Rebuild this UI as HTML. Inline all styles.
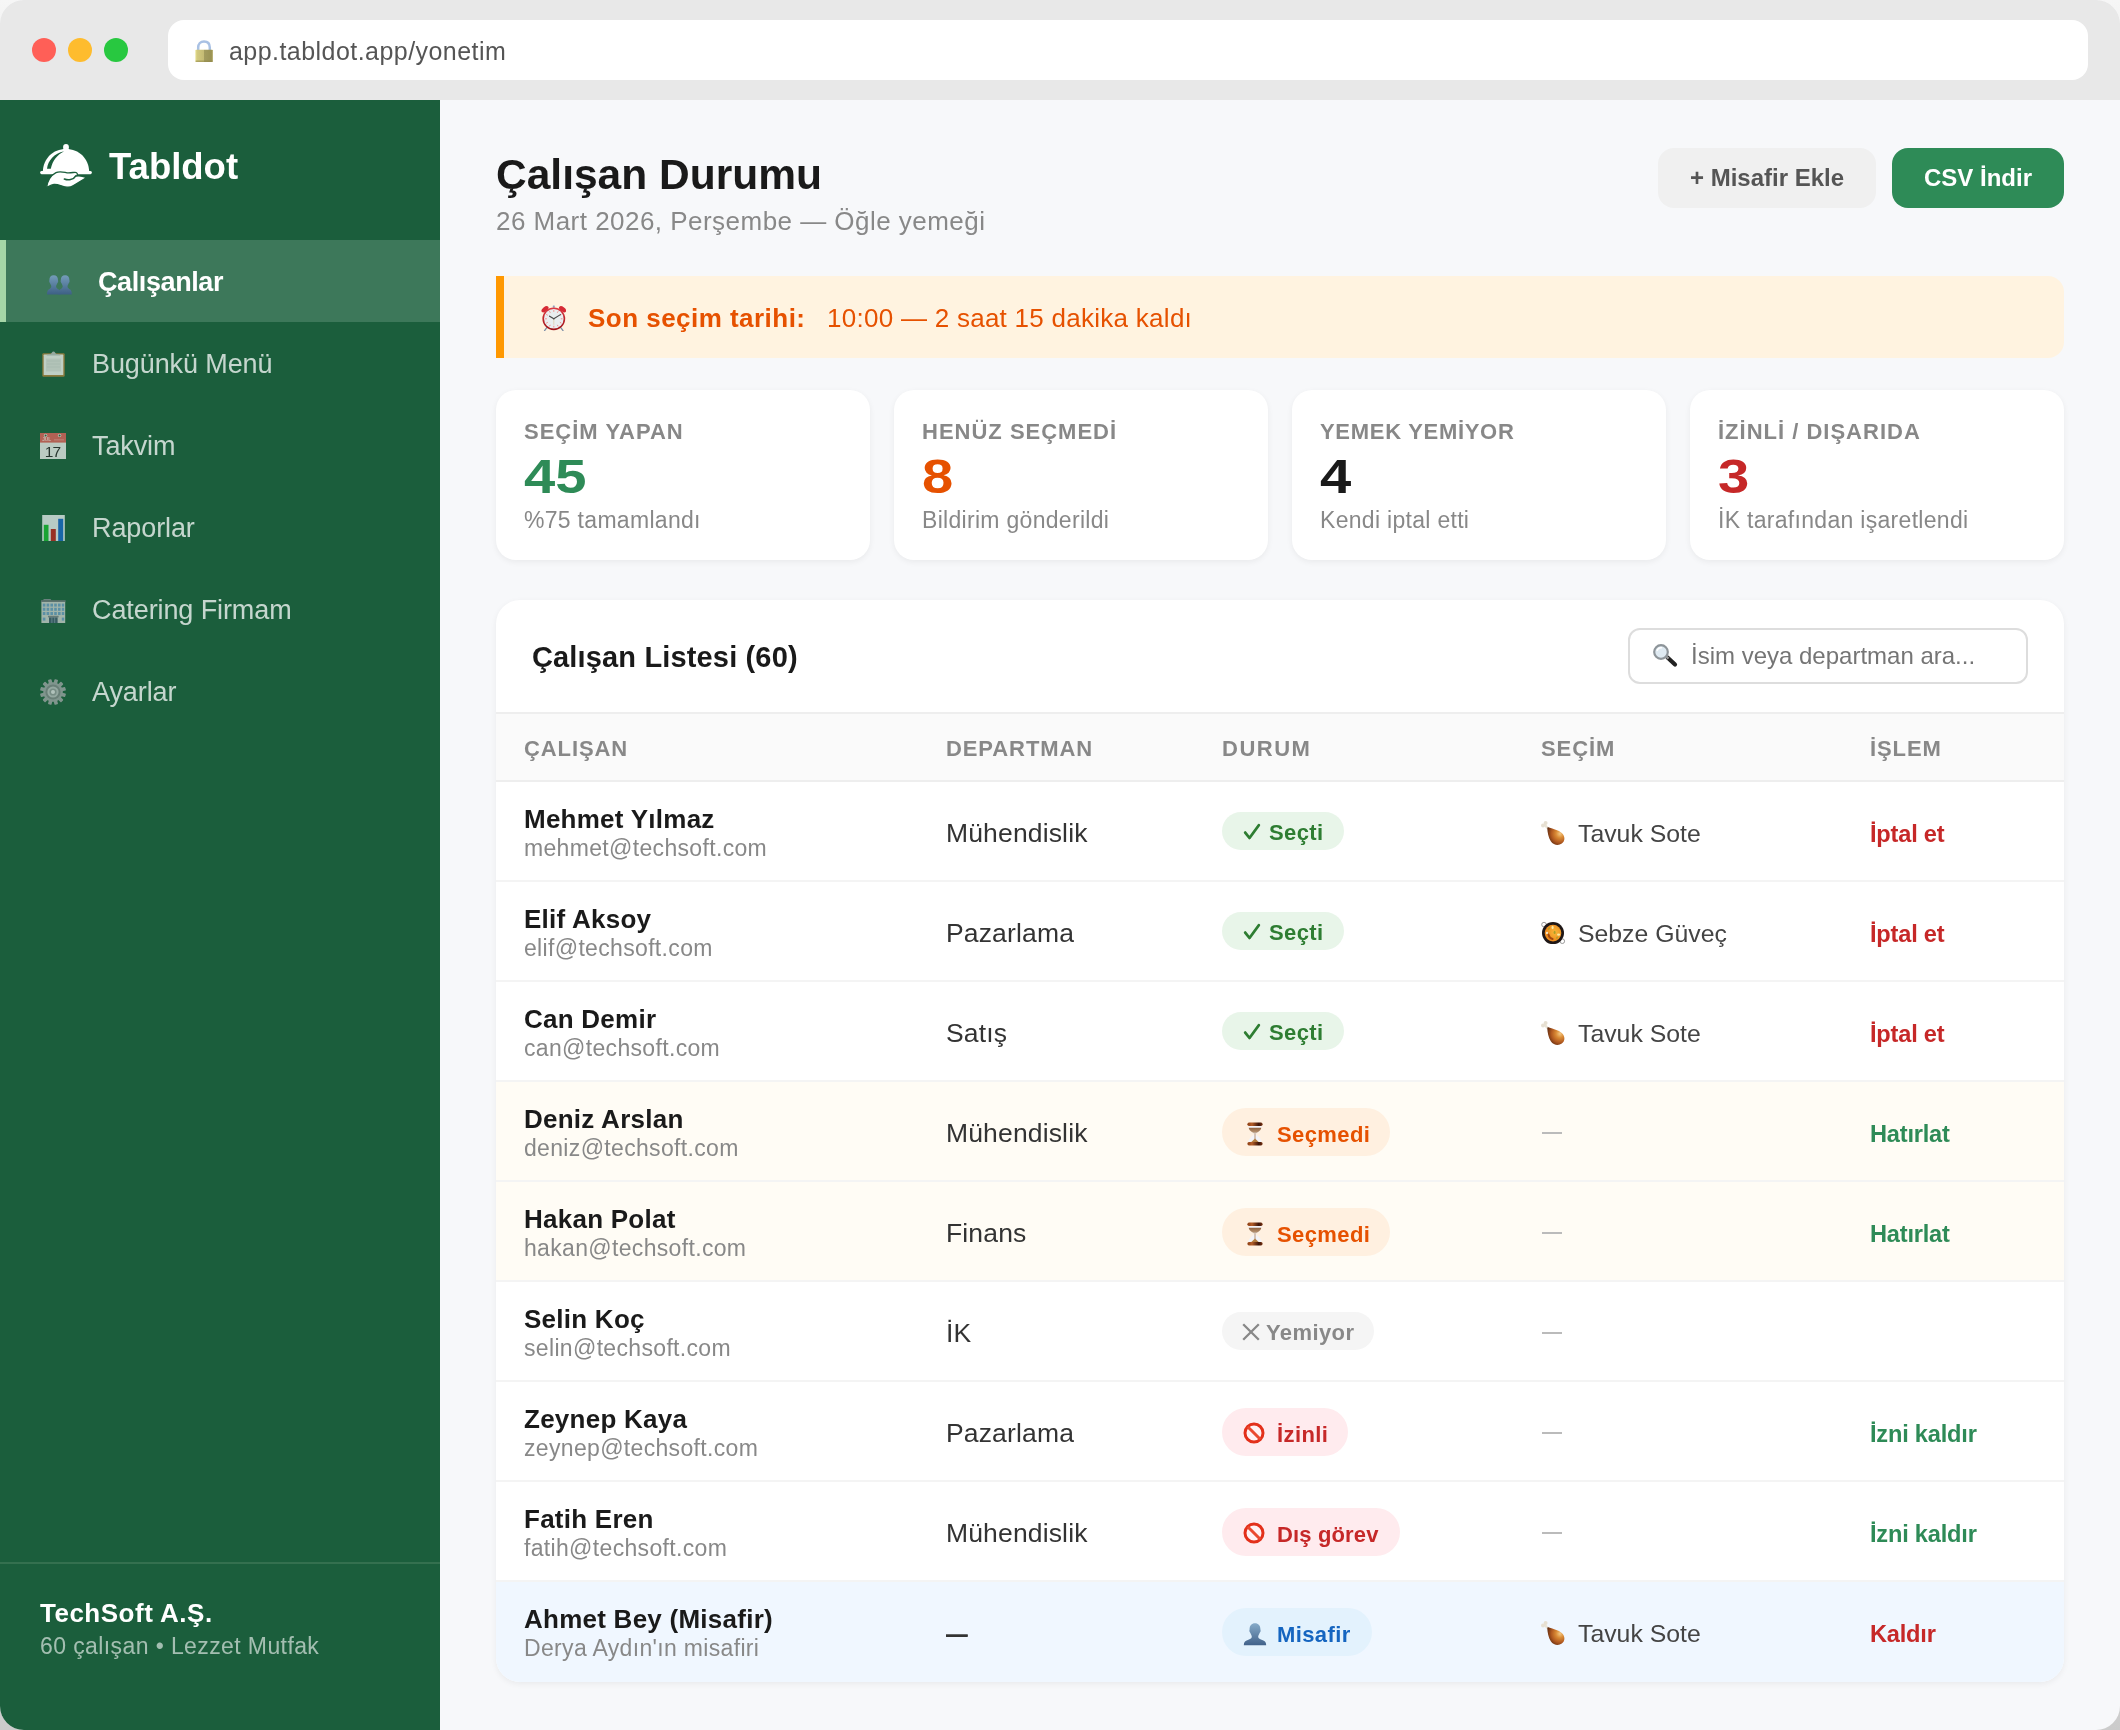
<!DOCTYPE html>
<html lang="tr">
<head>
<meta charset="utf-8">
<title>Tabldot — Çalışan Durumu</title>
<style>
*{box-sizing:border-box;margin:0;padding:0}
html,body{width:2120px;height:1730px;overflow:hidden}
body{font-family:"Liberation Sans",sans-serif;background:linear-gradient(#f6f6f6 0,#f0f0f0 60px,#d0d0d0 1670px,#cbcbcb 1730px);color:#1a1a1a}
.win{will-change:transform;position:absolute;left:0;top:0;width:2120px;height:1730px;border-radius:24px;overflow:hidden;background:#f7f8fa}
.chrome{position:absolute;left:0;top:0;width:2120px;height:100px;background:#e8e8e8}
.tl{position:absolute;top:38px;width:24px;height:24px;border-radius:50%}
.url{position:absolute;left:168px;top:20px;width:1920px;height:60px;background:#fff;border-radius:16px}
.url span{position:absolute;left:61px;top:15.3px;font-size:25px;line-height:32px;color:#555;letter-spacing:.45px;white-space:nowrap}
.url svg{position:absolute;left:26px;top:19px}
.side{position:absolute;left:0;top:100px;width:440px;height:1630px;background:#1b5e3c}
.brand{position:absolute;left:109px;top:45.2px;font-size:36.5px;line-height:44px;font-weight:700;color:#fff;letter-spacing:0}
.logo{position:absolute;left:40px;top:44px}
.nav{position:absolute;left:0;top:140px;width:440px}
.nav div{position:relative;height:82px;padding-left:92px;font-size:27px;letter-spacing:-.1px;line-height:85px;color:rgba(255,255,255,.75);white-space:nowrap}
.nav div svg{position:absolute;left:40px;top:29px;opacity:.8}
.nav div.act{background:#3d785a;border-left:6px solid #a5d6a7;color:#fff;font-weight:700;letter-spacing:-.4px}
.nav div.act svg{left:41px;top:35px}
.foot{position:absolute;left:0;top:1462px;width:440px;height:168px;border-top:2px solid #34704f}
.foot b{position:absolute;left:40px;top:30.6px;font-size:26px;letter-spacing:.5px;line-height:36px;color:#fff;white-space:nowrap}
.foot span{position:absolute;left:40px;top:67.2px;font-size:23px;letter-spacing:.4px;line-height:30px;color:rgba(255,255,255,.6);white-space:nowrap}
.main{position:absolute;left:440px;top:100px;width:1680px;height:1630px}
h1{position:absolute;left:56px;top:49.3px;font-size:42.5px;line-height:52px;font-weight:700;letter-spacing:0;white-space:nowrap}
.sub{position:absolute;left:56px;top:103.6px;font-size:26px;letter-spacing:.47px;line-height:34px;color:#888;white-space:nowrap}
.btn{position:absolute;top:48px;height:60px;border-radius:16px;font-size:24px;font-weight:700;line-height:60px;text-align:center;white-space:nowrap}
.alert{position:absolute;left:56px;top:176px;width:1568px;height:82px;background:#fff3e0;border-left:8px solid #ff9800;border-radius:0 16px 16px 0;color:#e65100;font-size:26px;line-height:85px;white-space:nowrap}
.alert b{position:absolute;left:84px;top:0;letter-spacing:.47px}
.alert span{position:absolute;left:323px;top:0;letter-spacing:.27px}
.alert svg{position:absolute;left:36.600px;top:29px}
.card{position:absolute;top:290px;width:374px;height:170px;background:#fff;border-radius:20px;box-shadow:0 2px 6px rgba(0,0,0,.06)}
.card .l{position:absolute;left:28px;top:28.4px;font-size:22px;line-height:28px;font-weight:700;color:#888;letter-spacing:1px;white-space:nowrap}
.card .v{position:absolute;left:28px;top:59.1px;font-size:48px;line-height:56px;font-weight:700;transform:scaleX(1.17);transform-origin:0 0;white-space:nowrap}
.card .s{position:absolute;left:28px;top:116px;font-size:23px;letter-spacing:.3px;line-height:28px;color:#888;white-space:nowrap}
.tbl{position:absolute;left:56px;top:500px;width:1568px;height:1082px;background:#fff;border-radius:24px;box-shadow:0 2px 6px rgba(0,0,0,.06);overflow:hidden}
.tbl h2{position:absolute;left:36px;top:37.4px;font-size:29px;letter-spacing:.15px;line-height:40px;font-weight:700;white-space:nowrap}
.search{position:absolute;left:1132px;top:28px;width:400px;height:56px;border:2px solid #ddd;border-radius:12px;background:#fff}
.search span{position:absolute;left:61px;top:10px;font-size:24px;line-height:32px;color:#757575;white-space:nowrap}
.search svg{position:absolute;left:22px;top:14px}
.th{position:absolute;left:0;top:112px;width:1568px;height:70px;background:#fafafa;border-top:2px solid #eee;border-bottom:2px solid #eee}
.th span{position:absolute;top:20.6px;font-size:22px;line-height:28px;font-weight:700;color:#888;letter-spacing:.9px;white-space:nowrap}
.r{position:absolute;left:0;width:1568px;height:100px;border-bottom:2px solid #f4f4f4}
.r .n{position:absolute;left:28px;top:19.5px;font-size:26px;letter-spacing:.25px;line-height:34px;font-weight:700;white-space:nowrap}
.r .e{position:absolute;left:28px;top:51.4px;font-size:23px;letter-spacing:.33px;line-height:30px;color:#888;white-space:nowrap}
.r .d{position:absolute;left:450px;top:33.2px;font-size:26.5px;letter-spacing:.15px;line-height:36px;color:#333;white-space:nowrap}
.r .c{position:absolute;left:1082px;top:33.5px;font-size:24.8px;line-height:36px;color:#444;white-space:nowrap}
.r .c svg{position:absolute;left:-38px;top:4.500px}
.r .dash{position:absolute;left:1046px;top:50px;width:20px;height:2px;background:#bbb}
.r .a{position:absolute;left:1374px;top:33.8px;font-size:23.6px;letter-spacing:-.2px;line-height:36px;font-weight:700;white-space:nowrap}
.bd{position:absolute;left:726px;border-radius:30px;font-size:22px;letter-spacing:.4px;font-weight:700;white-space:nowrap;overflow:hidden}
.bd svg{position:absolute}
.bd span{position:absolute;top:0}
.b-ok{top:30px;width:122px;height:38px;background:#e8f5e9;color:#2e7d32;line-height:41px}
.b-ok svg{left:21px;top:9px}.b-ok span{left:47px}
.b-no{top:30px;width:152px;height:38px;background:#f5f5f5;color:#888;line-height:41px}
.b-no svg{left:20px;top:11px}.b-no span{left:44px}
.b-wait{top:26px;width:168px;height:48px;background:#fff0e0;color:#e65100;line-height:53px}
.b-wait svg{left:23.500px;top:13.500px}.b-wait span{left:55px}
.b-off{top:26px;height:48px;background:#ffebee;color:#c62828;line-height:53px}
.b-off svg{left:21px;top:14px}.b-off span{left:55px}
.b-guest{top:26px;width:150px;height:48px;background:#e3f2fd;color:#1565c0;line-height:53px}
.b-guest svg{left:20.500px;top:13.700px}.b-guest span{left:55px}
.red{color:#c62828}.grn{color:#2e8b57}
</style>
</head>
<body>
<svg width="0" height="0" style="position:absolute" aria-hidden="true">
<linearGradient id="g-gold" x1="0" y1="0" x2="1" y2="0"><stop offset="0" stop-color="#e6df8c"/><stop offset=".12" stop-color="#d2c97e"/><stop offset=".48" stop-color="#c4bb74"/><stop offset=".5" stop-color="#a39c5e"/><stop offset=".9" stop-color="#9a9355"/><stop offset="1" stop-color="#a79d52"/></linearGradient>
<linearGradient id="g-ppl" x1="0" y1="0" x2="0" y2="1"><stop offset="0" stop-color="#83a6d2"/><stop offset="1" stop-color="#3d5a90"/></linearGradient>
<linearGradient id="g-clk" x1="0" y1="0" x2="0" y2="1"><stop offset="0" stop-color="#e03a42"/><stop offset="1" stop-color="#9c1016"/></linearGradient>
<linearGradient id="g-bust" x1="0" y1="0" x2="0" y2="1"><stop offset="0" stop-color="#86abc9"/><stop offset="1" stop-color="#42628a"/></linearGradient>
<radialGradient id="g-meat" cx=".74" cy=".36" r=".8"><stop offset="0" stop-color="#f4c680"/><stop offset=".3" stop-color="#d98a34"/><stop offset=".62" stop-color="#b25a20"/><stop offset="1" stop-color="#57260f"/></radialGradient>
<linearGradient id="g-wood" x1="0" y1="0" x2="1" y2="0"><stop offset="0" stop-color="#8a3c12"/><stop offset=".3" stop-color="#b55f2a"/><stop offset=".75" stop-color="#3a1206"/><stop offset="1" stop-color="#7a3413"/></linearGradient>
<linearGradient id="g-sand" x1="0" y1="0" x2="0" y2="1"><stop offset="0" stop-color="#8e6240"/><stop offset=".6" stop-color="#b08a68"/><stop offset="1" stop-color="#d8d0cc"/></linearGradient>
<radialGradient id="g-food" cx=".6" cy=".45" r=".7"><stop offset="0" stop-color="#f8b83a"/><stop offset="1" stop-color="#ea7d14"/></radialGradient>
</svg>
<div class="win">
<div class="chrome">
<i class="tl" style="left:32px;background:#ff5f57"></i><i class="tl" style="left:68px;background:#febc2e"></i><i class="tl" style="left:104px;background:#28c840"></i>
<div class="url"><svg width="20" height="24" viewBox="0 0 20 24"><path d="M4.200 12V8.600C4.200 4.600 6.600 2.400 10 2.400C13.400 2.400 15.800 4.600 15.800 8.600V12" fill="none" stroke="#a9c1e4" stroke-width="2.500"/>
<rect x="1.400" y="10.800" width="17.400" height="12.200" rx=".8" fill="url(#g-gold)"/>
<rect x="1.400" y="21.400" width="17.400" height="1.600" rx=".8" fill="#8f8748" opacity=".55"/></svg><span>app.tabldot.app/yonetim</span></div>
</div>
<div class="side">
<svg class="logo" width="52" height="44" viewBox="0 0 52 44"><circle cx="26" cy="2.900" r="2.900" fill="#fff"/>
<rect x="23.600" y="3" width="4.800" height="3.400" fill="#fff"/>
<path d="M2.800 27.600C3.400 14.400 12.800 5 26 5C39.200 5 48.600 14.400 49.200 27.600Z" fill="#fff"/>
<path d="M7 24.800C8 16.200 14 9.600 24.200 7.200C17.200 10.600 12.600 16.600 10.800 24.800Z" fill="#1b5e3c"/>
<path d="M1.600 27H50.400C52.400 27 52.400 30.200 50.400 30.200H1.600C-.4 30.200 -.4 27 1.600 27Z" fill="#fff"/>
<path d="M6.600 43.500C7.400 37.500 10.400 31.600 16 28.700C19.200 27.100 22.400 27.900 26 28.600C29.400 29.200 32.400 28.500 35 28.300C37.600 28.200 37.900 30.600 36.600 32C39 31.600 42.500 32.400 45.200 33.200C45.800 33.400 45.600 34.200 45 34.500L33.500 41.600C31.400 42.900 29.400 43.500 27 43.200C22.600 42.700 18 40 14 40.400C11.200 40.700 9 42.200 6.600 43.500Z" fill="#fff" stroke="#1b5e3c" stroke-width="1.300" stroke-linejoin="round"/>
<path d="M24.400 35C28 36.500 33.400 36 35.800 31.800" fill="none" stroke="#1b5e3c" stroke-width="1.600" stroke-linecap="round"/></svg><div class="brand">Tabldot</div>
<div class="nav">
<div class="act"><svg width="25" height="20" viewBox="0 0 25 20"><path d="M6.700 .3C3.900 .3 2.400 2.200 2.400 5.100C2.400 5.800 2.100 6 2.300 6.800C2.500 7.600 2.900 7.800 3.200 8.500C3.600 9.700 4.300 10.500 4.300 11.600C4.300 13.100 2.800 13.800 1.600 14.600C.5 15.400 0 16.600 0 19.600H13.400C13.400 16.600 12.900 15.400 11.800 14.600C10.600 13.800 9.100 13.100 9.100 11.600C9.100 10.500 9.800 9.700 10.200 8.500C10.500 7.800 10.900 7.600 11.100 6.800C11.300 6 11 5.800 11 5.100C11 2.200 9.500 .3 6.700 .3Z" fill="url(#g-ppl)"/>
<path d="M6.700 .3C3.900 .3 2.400 2.200 2.400 5.100C2.400 5.800 2.100 6 2.300 6.800C2.500 7.600 2.900 7.800 3.200 8.500C3.600 9.700 4.300 10.500 4.300 11.600C4.300 13.100 2.800 13.800 1.600 14.600C.5 15.400 0 16.600 0 19.600H13.400C13.400 16.600 12.900 15.400 11.800 14.600C10.600 13.800 9.100 13.100 9.100 11.600C9.100 10.500 9.800 9.700 10.200 8.500C10.500 7.800 10.900 7.600 11.100 6.800C11.300 6 11 5.800 11 5.100C11 2.200 9.500 .3 6.700 .3Z" fill="url(#g-ppl)" transform="translate(11.4 0)"/></svg>Çalışanlar</div>
<div><svg width="23" height="26" viewBox="0 0 23 26" style="left:41.500px"><rect x=".3" y="2.300" width="22.400" height="23.400" rx="1.200" fill="#a8833f"/>
<rect x="1.700" y="3.600" width="19.600" height="20.400" rx=".6" fill="#e9ece8"/>
<rect x="4" y="7.500" width="15" height="13" fill="#d9ddd8"/>
<path d="M5 10H18M5 13H18M5 16H18" stroke="#cdd2cc" stroke-width="1"/>
<path d="M4.500 4.600C4.500 3.400 7 3.400 8.500 2.900C9.800 2.500 10 .4 11.500 .4C13 .4 13.200 2.500 14.500 2.900C16 3.400 18.500 3.400 18.500 4.600Z" fill="#b4bdb9"/></svg>Bugünkü Menü</div>
<div><svg width="26" height="26" viewBox="0 0 26 26"><rect x="0" y="0" width="26" height="26" fill="#e4e7e4"/>
<rect x="0" y="0" width="26" height="9.600" fill="#d9625a"/>
<circle cx="5.600" cy="2.400" r="1.700" fill="#f3dedb"/><circle cx="19.600" cy="2.400" r="1.700" fill="#f3dedb"/>
<circle cx="5.600" cy="2.400" r="1" fill="#2c5a3c"/><circle cx="19.600" cy="2.400" r="1" fill="#2c5a3c"/>
<text x="6.600" y="8.300" font-family="Liberation Sans,sans-serif" font-size="4.800" font-weight="700" fill="#f4cfcb" text-anchor="middle">JUL</text>
<rect x="14" y="6" width="10" height="1.600" fill="#e88a83" opacity=".7"/>
<text x="12.400" y="23.600" font-family="Liberation Sans,sans-serif" font-size="15.500" fill="#2b2b2b" text-anchor="middle" letter-spacing="-1">17</text></svg>Takvim</div>
<div><svg width="23" height="26" viewBox="0 0 23 26" style="left:41.500px"><rect x=".2" y="0" width="22.600" height="26" fill="#dfe6e6"/>
<rect x="1.800" y="9.800" width="4.700" height="16.200" fill="#19b432"/>
<rect x="8.800" y="14" width="5" height="12" fill="#b8261d"/>
<rect x="16.200" y="3.800" width="5" height="22.200" fill="#1a68c4"/></svg>Raporlar</div>
<div><svg width="25" height="24" viewBox="0 0 25 24" style="left:40.500px;top:31px"><path d="M1.500 1.500L3 0H9.500L10.500 1.500Z" fill="#7f8a8f"/>
<rect x="0" y="1.200" width="24.600" height="2" fill="#6f787c"/>
<rect x=".4" y="3" width="23.800" height="21" fill="#c4cac6"/>
<g fill="#6d9dc0"><rect x="1.800" y="4.600" width="2.600" height="3"/><rect x="5.600" y="4.600" width="2.600" height="3"/><rect x="9.400" y="4.600" width="2.600" height="3"/><rect x="13.200" y="4.600" width="2.600" height="3"/><rect x="17" y="4.600" width="2.600" height="3"/><rect x="20.800" y="4.600" width="2.400" height="3"/>
<rect x="1.800" y="8.800" width="2.600" height="3"/><rect x="5.600" y="8.800" width="2.600" height="3"/><rect x="9.400" y="8.800" width="2.600" height="3"/><rect x="13.200" y="8.800" width="2.600" height="3"/><rect x="17" y="8.800" width="2.600" height="3"/><rect x="20.800" y="8.800" width="2.400" height="3"/>
<rect x="1.800" y="13" width="2.600" height="3"/><rect x="5.600" y="13" width="2.600" height="3"/><rect x="9.400" y="13" width="2.600" height="3"/><rect x="13.200" y="13" width="2.600" height="3"/><rect x="17" y="13" width="2.600" height="3"/><rect x="20.800" y="13" width="2.400" height="3"/>
<rect x="1.800" y="18.600" width="2.600" height="3"/><rect x="20.800" y="18.600" width="2.400" height="3"/></g>
<rect x="7" y="16.800" width="10.600" height="1.600" fill="#7a8489"/>
<rect x="8" y="18.400" width="8.600" height="5.600" fill="#3f5a6b"/>
<path d="M10.900 18.400V24M13.700 18.400V24" stroke="#8aa2b0" stroke-width=".7"/></svg>Catering Firmam</div>
<div><svg width="26" height="26" viewBox="0 0 26 26"><g fill="#9aa3a2" transform="rotate(15 13 13)">
<circle cx="13" cy="13" r="9.800"/>
<rect x="11.200" y="0" width="3.600" height="26" rx=".8"/><rect x="11.200" y="0" width="3.600" height="26" rx=".8" transform="rotate(30 13 13)"/><rect x="11.200" y="0" width="3.600" height="26" rx=".8" transform="rotate(60 13 13)"/><rect x="11.200" y="0" width="3.600" height="26" rx=".8" transform="rotate(90 13 13)"/><rect x="11.200" y="0" width="3.600" height="26" rx=".8" transform="rotate(120 13 13)"/><rect x="11.200" y="0" width="3.600" height="26" rx=".8" transform="rotate(150 13 13)"/>
</g>
<circle cx="13" cy="13" r="7.600" fill="#7d8786"/>
<circle cx="13" cy="13" r="5.600" fill="#b3bbba"/>
<circle cx="13" cy="13" r="3.600" fill="#8f9998"/>
<circle cx="13" cy="13" r="2" fill="#d8dddc"/></svg>Ayarlar</div>
</div>
<div class="foot"><b>TechSoft A.Ş.</b><span>60 çalışan • Lezzet Mutfak</span></div>
</div>
<div class="main">
<h1>Çalışan Durumu</h1>
<div class="sub">26 Mart 2026, Perşembe — Öğle yemeği</div>
<div class="btn" style="left:1218px;width:218px;background:#f0f0f0;color:#555">+ Misafir Ekle</div>
<div class="btn" style="left:1452px;width:172px;background:#2e8b57;color:#fff">CSV İndir</div>
<div class="alert"><svg width="25" height="26" viewBox="0 0 25 26"><path d="M5.800 22.600L3.600 25.600M19.800 22.600L22 25.600" stroke="#7c8da6" stroke-width="1.300" stroke-linecap="round"/>
<rect x="11.800" y=".4" width="2" height="2.400" rx=".6" fill="#8fa0bf"/>
<ellipse cx="4" cy="4.300" rx="4.100" ry="2.300" transform="rotate(-38 4 4.300)" fill="#d62a35"/>
<ellipse cx="21.600" cy="4.300" rx="4.100" ry="2.300" transform="rotate(38 21.600 4.300)" fill="#d62a35"/>
<path d="M5 7.400L7.200 9.600M20.600 7.400L18.400 9.600" stroke="#6b5050" stroke-width="1"/>
<circle cx="12.800" cy="13.800" r="11.400" fill="url(#g-clk)"/>
<circle cx="12.800" cy="13.800" r="9.800" fill="#e9eef0"/>
<path d="M12.80 6.80L12.80 5.10M16.30 7.74L17.15 6.27M18.86 10.30L20.33 9.45M19.80 13.80L21.50 13.80M18.86 17.30L20.33 18.15M16.30 19.86L17.15 21.33M12.80 20.80L12.80 22.50M9.30 19.86L8.45 21.33M6.74 17.30L5.27 18.15M5.80 13.80L4.10 13.80M6.74 10.30L5.27 9.45M9.30 7.74L8.45 6.27" stroke="#f28b8b" stroke-width="1"/>
<path d="M12.800 13.800V19.800" stroke="#d9bf95" stroke-width=".6"/>
<path d="M12.800 13.800L8.600 11.200" stroke="#4a4a4a" stroke-width="1.300" stroke-linecap="round"/>
<path d="M12.800 13.800L19.400 9.600" stroke="#4a4a4a" stroke-width="1.100" stroke-linecap="round"/></svg><b>Son seçim tarihi:</b><span>10:00 — 2 saat 15 dakika kaldı</span></div>
<div class="card" style="left:56px"><div class="l">SEÇİM YAPAN</div><div class="v" style="color:#2e8b57">45</div><div class="s">%75 tamamlandı</div></div>
<div class="card" style="left:454px"><div class="l">HENÜZ SEÇMEDİ</div><div class="v" style="color:#e65100">8</div><div class="s">Bildirim gönderildi</div></div>
<div class="card" style="left:852px"><div class="l" style="letter-spacing:.7px">YEMEK YEMİYOR</div><div class="v" style="color:#1a1a1a">4</div><div class="s">Kendi iptal etti</div></div>
<div class="card" style="left:1250px"><div class="l">İZİNLİ / DIŞARIDA</div><div class="v" style="color:#c62828">3</div><div class="s">İK tarafından işaretlendi</div></div>
<div class="tbl">
<h2>Çalışan Listesi (60)</h2>
<div class="search"><svg width="26" height="24" viewBox="0 0 26 24"><path d="M15.500 13.500L23 20.500" stroke="#222" stroke-width="4.200" stroke-linecap="round"/>
<path d="M13.500 11.800L16.500 14.600" stroke="#9a9a9a" stroke-width="2.400"/>
<circle cx="9" cy="8" r="6.800" fill="#dfeaf2" stroke="#8d9499" stroke-width="2.200"/>
<path d="M5.200 6.500A4.200 4.200 0 0 1 9.500 3.800" stroke="#fff" stroke-width="1.400" fill="none" stroke-linecap="round"/></svg><span>İsim veya departman ara...</span></div>
<div class="th"><span style="left:28px">ÇALIŞAN</span><span style="left:450px">DEPARTMAN</span><span style="left:726px;letter-spacing:1.5px">DURUM</span><span style="left:1045px">SEÇİM</span><span style="left:1374px">İŞLEM</span></div>
<div class="r" style="top:182px"><div class="n">Mehmet Yılmaz</div><div class="e">mehmet@techsoft.com</div><div class="d">Mühendislik</div><div class="bd b-ok"><svg width="18" height="20" viewBox="0 0 18 20"><path d="M2.200 11.600L6.500 17L15.800 4.200" fill="none" stroke="#2e7d32" stroke-width="2.800" stroke-linecap="round" stroke-linejoin="round"/></svg><span>Seçti</span></div><div class="c"><svg width="26" height="28" viewBox="0 0 26 28"><path d="M4.600 4.600L8.400 9" stroke="#e9e2d4" stroke-width="2.400" stroke-linecap="round"/>
<circle cx="3" cy="5.500" r="2" fill="#e6dfd1"/><circle cx="5.600" cy="2.900" r="2" fill="#e6dfd1"/>
<path d="M7.300 8C7.300 7.300 8 7.200 9 7.600C13 9 18.500 10.200 21.800 13C25.400 16.200 25.200 21.300 21.800 23.600C18.400 25.900 13.600 25.200 10.800 21.200C8.400 17.800 7.400 12 7.300 8Z" fill="url(#g-meat)"/></svg>Tavuk Sote</div><div class="a red">İptal et</div></div>
<div class="r" style="top:282px"><div class="n">Elif Aksoy</div><div class="e">elif@techsoft.com</div><div class="d">Pazarlama</div><div class="bd b-ok"><svg width="18" height="20" viewBox="0 0 18 20"><path d="M2.200 11.600L6.500 17L15.800 4.200" fill="none" stroke="#2e7d32" stroke-width="2.800" stroke-linecap="round" stroke-linejoin="round"/></svg><span>Seçti</span></div><div class="c"><svg width="26" height="28" viewBox="0 0 26 28"><circle cx="4" cy="4.600" r="2.300" fill="none" stroke="#9a9a9a" stroke-width="1"/><circle cx="22.300" cy="21.200" r="2.300" fill="none" stroke="#9a9a9a" stroke-width="1"/>
<circle cx="13" cy="13.100" r="11" fill="#1f1716"/>
<circle cx="13" cy="13.100" r="8.300" fill="url(#g-food)"/>
<ellipse cx="12.600" cy="7.500" rx="1.100" ry="1.800" fill="#fbe9a0"/><ellipse cx="18.600" cy="14.600" rx="1.600" ry="1.200" fill="#fbe9a0"/><ellipse cx="7" cy="13" rx="1.100" ry="1.300" fill="#f6e6c8"/>
<ellipse cx="14.600" cy="12.400" rx="1" ry="1.600" fill="#a9a02a"/><ellipse cx="9" cy="8.600" rx=".8" ry="1.300" transform="rotate(30 9 8.600)" fill="#a9a02a"/><ellipse cx="17" cy="17.600" rx=".8" ry="1.200" transform="rotate(30 17 17.600)" fill="#a9a02a"/>
<path d="M8.400 14.500C9 17 10.500 18.500 12.600 19" stroke="#a3480f" stroke-width="2" stroke-linecap="round" fill="none"/></svg>Sebze Güveç</div><div class="a red">İptal et</div></div>
<div class="r" style="top:382px"><div class="n">Can Demir</div><div class="e">can@techsoft.com</div><div class="d">Satış</div><div class="bd b-ok"><svg width="18" height="20" viewBox="0 0 18 20"><path d="M2.200 11.600L6.500 17L15.800 4.200" fill="none" stroke="#2e7d32" stroke-width="2.800" stroke-linecap="round" stroke-linejoin="round"/></svg><span>Seçti</span></div><div class="c"><svg width="26" height="28" viewBox="0 0 26 28"><path d="M4.600 4.600L8.400 9" stroke="#e9e2d4" stroke-width="2.400" stroke-linecap="round"/>
<circle cx="3" cy="5.500" r="2" fill="#e6dfd1"/><circle cx="5.600" cy="2.900" r="2" fill="#e6dfd1"/>
<path d="M7.300 8C7.300 7.300 8 7.200 9 7.600C13 9 18.500 10.200 21.800 13C25.400 16.200 25.200 21.300 21.800 23.600C18.400 25.900 13.600 25.200 10.800 21.200C8.400 17.800 7.400 12 7.300 8Z" fill="url(#g-meat)"/></svg>Tavuk Sote</div><div class="a red">İptal et</div></div>
<div class="r" style="top:482px;background:#fffcf5"><div class="n">Deniz Arslan</div><div class="e">deniz@techsoft.com</div><div class="d">Mühendislik</div><div class="bd b-wait"><svg width="18" height="24" viewBox="0 0 18 24"><path d="M2.400 3.400H15.600C15.600 8.500 11 10 9.500 12C11 14 15.600 15.500 15.600 20.600H2.400C2.400 15.500 7 14 8.500 12C7 10 2.400 8.500 2.400 3.400Z" fill="#f3f3f8"/>
<path d="M2.700 5.700H15.300C14.800 9.200 11 10.300 9.400 12H8.600C7 10.300 3.200 9.200 2.700 5.700Z" fill="url(#g-sand)"/>
<path d="M9 12V17" stroke="#a07048" stroke-width=".7"/>
<path d="M4.800 20.600L9 16.400L13.200 20.600Z" fill="#b27c3e"/>
<rect x="1.400" y=".6" width="15.200" height="3.300" rx="1.600" fill="url(#g-wood)"/>
<rect x="1.400" y="20.100" width="15.200" height="3.300" rx="1.600" fill="url(#g-wood)"/></svg><span>Seçmedi</span></div><div class="dash"></div><div class="a grn">Hatırlat</div></div>
<div class="r" style="top:582px;background:#fffcf5"><div class="n">Hakan Polat</div><div class="e">hakan@techsoft.com</div><div class="d">Finans</div><div class="bd b-wait"><svg width="18" height="24" viewBox="0 0 18 24"><path d="M2.400 3.400H15.600C15.600 8.500 11 10 9.500 12C11 14 15.600 15.500 15.600 20.600H2.400C2.400 15.500 7 14 8.500 12C7 10 2.400 8.500 2.400 3.400Z" fill="#f3f3f8"/>
<path d="M2.700 5.700H15.300C14.800 9.200 11 10.300 9.400 12H8.600C7 10.300 3.200 9.200 2.700 5.700Z" fill="url(#g-sand)"/>
<path d="M9 12V17" stroke="#a07048" stroke-width=".7"/>
<path d="M4.800 20.600L9 16.400L13.200 20.600Z" fill="#b27c3e"/>
<rect x="1.400" y=".6" width="15.200" height="3.300" rx="1.600" fill="url(#g-wood)"/>
<rect x="1.400" y="20.100" width="15.200" height="3.300" rx="1.600" fill="url(#g-wood)"/></svg><span>Seçmedi</span></div><div class="dash"></div><div class="a grn">Hatırlat</div></div>
<div class="r" style="top:682px"><div class="n">Selin Koç</div><div class="e">selin@techsoft.com</div><div class="d">İK</div><div class="bd b-no"><svg width="18" height="18" viewBox="0 0 18 18"><path d="M1.200 1.200L16.800 16.800M16.800 1.200L1.200 16.800" fill="none" stroke="#888" stroke-width="2.300" stroke-linecap="butt"/></svg><span>Yemiyor</span></div><div class="dash"></div></div>
<div class="r" style="top:782px"><div class="n">Zeynep Kaya</div><div class="e">zeynep@techsoft.com</div><div class="d">Pazarlama</div><div class="bd b-off" style="width:126px"><svg width="22" height="22" viewBox="0 0 22 22"><circle cx="11" cy="11" r="9" fill="rgba(255,255,255,.35)" stroke="#e3301a" stroke-width="3"/>
<path d="M4.700 4.700L17.300 17.300" stroke="#ea4a30" stroke-width="3"/></svg><span>İzinli</span></div><div class="dash"></div><div class="a grn">İzni kaldır</div></div>
<div class="r" style="top:882px"><div class="n">Fatih Eren</div><div class="e">fatih@techsoft.com</div><div class="d">Mühendislik</div><div class="bd b-off" style="width:178px"><svg width="22" height="22" viewBox="0 0 22 22"><circle cx="11" cy="11" r="9" fill="rgba(255,255,255,.35)" stroke="#e3301a" stroke-width="3"/>
<path d="M4.700 4.700L17.300 17.300" stroke="#ea4a30" stroke-width="3"/></svg><span style="letter-spacing:.15px">Dış görev</span></div><div class="dash"></div><div class="a grn">İzni kaldır</div></div>
<div class="r" style="top:982px;background:#f0f7ff;border-bottom:0"><div class="n">Ahmet Bey (Misafir)</div><div class="e">Derya Aydın'ın misafiri</div><div class="d" style="transform:scaleX(.82);transform-origin:0 0;text-shadow:0 1px 0 #333">—</div><div class="bd b-guest"><svg width="24" height="24" viewBox="0 0 24 24"><path d="M12 1.200C8.600 1.200 6.600 3.600 6.600 7.200C6.600 8 6.200 8.300 6.400 9.200C6.600 10.200 7.200 10.400 7.500 11.200C8 12.600 8.800 13.500 8.800 14.800C8.800 16.600 6.800 17.400 4.200 18.300C1.800 19.200 .8 20.600 .8 23.200H23.200C23.200 20.600 22.200 19.200 19.800 18.300C17.200 17.400 15.200 16.600 15.200 14.800C15.200 13.500 16 12.600 16.500 11.200C16.800 10.400 17.400 10.200 17.600 9.200C17.800 8.300 17.400 8 17.400 7.200C17.400 3.600 15.400 1.200 12 1.200Z" fill="url(#g-bust)"/></svg><span>Misafir</span></div><div class="c"><svg width="26" height="28" viewBox="0 0 26 28"><path d="M4.600 4.600L8.400 9" stroke="#e9e2d4" stroke-width="2.400" stroke-linecap="round"/>
<circle cx="3" cy="5.500" r="2" fill="#e6dfd1"/><circle cx="5.600" cy="2.900" r="2" fill="#e6dfd1"/>
<path d="M7.300 8C7.300 7.300 8 7.200 9 7.600C13 9 18.500 10.200 21.800 13C25.400 16.200 25.200 21.300 21.800 23.600C18.400 25.900 13.600 25.200 10.800 21.200C8.400 17.800 7.400 12 7.300 8Z" fill="url(#g-meat)"/></svg>Tavuk Sote</div><div class="a red">Kaldır</div></div>
</div>
</div>
</div>
</body>
</html>
